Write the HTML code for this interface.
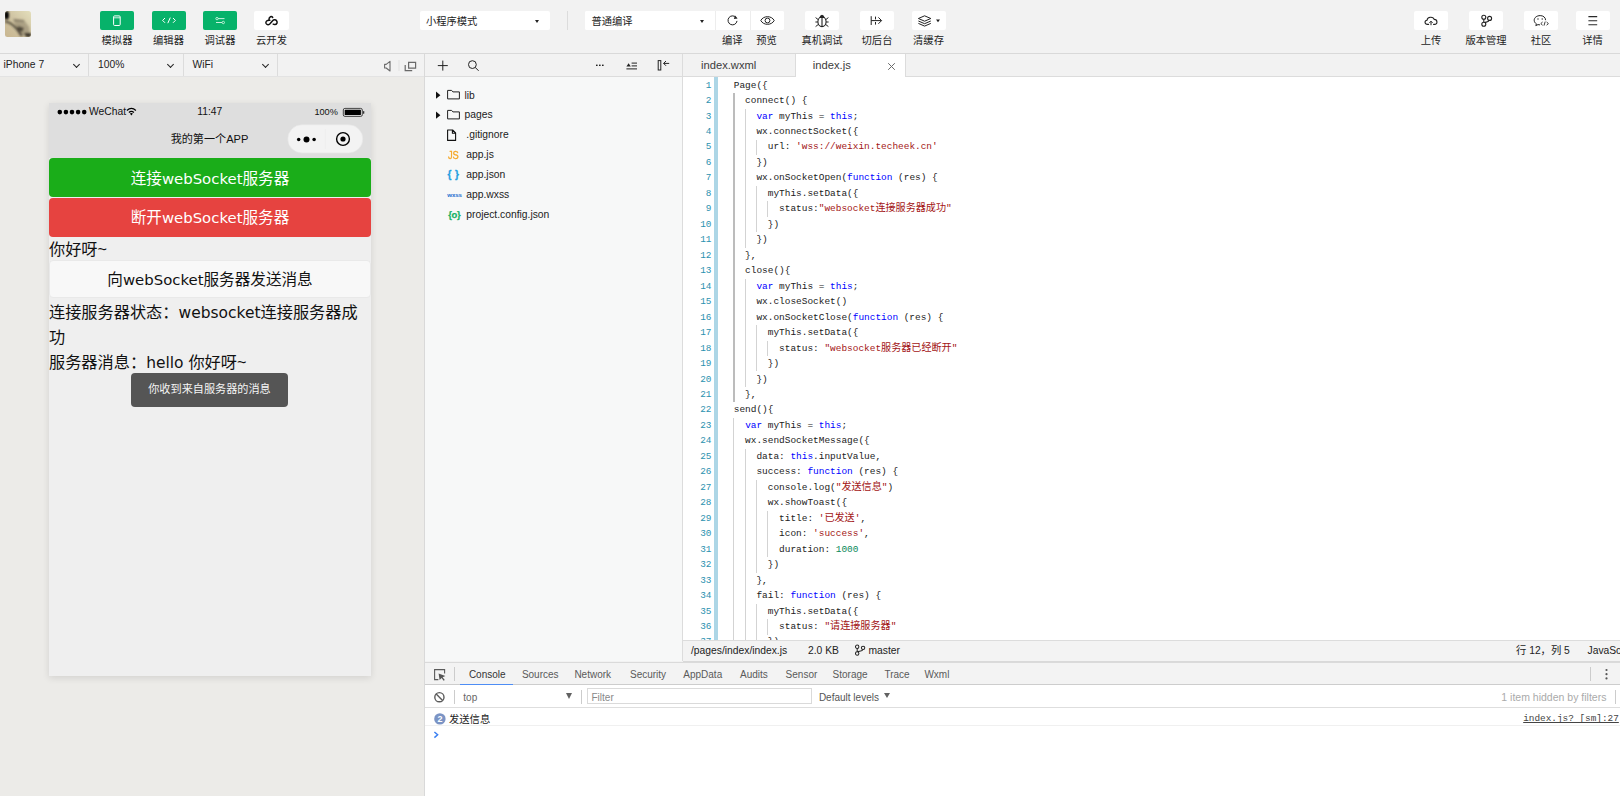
<!DOCTYPE html>
<html lang="zh-CN">
<head>
<meta charset="utf-8">
<title>微信开发者工具</title>
<style>
*{box-sizing:border-box;margin:0;padding:0}
html,body{width:1620px;height:796px;overflow:hidden;background:#f2f2f2;font-family:"Liberation Sans","Noto Sans CJK SC",sans-serif;color:#222}
.abs{position:absolute}
#root{position:relative;width:1620px;height:796px;overflow:hidden;background:#f2f2f2}
/* top toolbar */
#topbar{left:0;top:0;width:1620px;height:54px;background:#f2f2f2;border-bottom:1px solid #d9d9d9}
.tbtn{position:absolute;top:11px;height:19px;border-radius:2px;background:#fff}
.tbtn.g{background:#07b26a}
.tlbl{position:absolute;top:34.2px;font-size:10.3px;line-height:14px;text-align:center;color:#222;white-space:nowrap;transform:translateX(-50%)}
.tsel{position:absolute;top:11px;height:19px;background:#fff;border-radius:2px;font-size:10.3px;line-height:22.2px;padding-left:6.4px;color:#222}
.tsel:after{content:"";position:absolute;right:10.6px;top:8.6px;border:2.5px solid transparent;border-top:3px solid #222;border-bottom:0}
/* simulator */
#simbar{left:0;top:54px;width:424px;height:23px;background:#f2f2f2;border-bottom:1px solid #e3e3e3}
#simbar .it{position:absolute;top:0;height:22px;line-height:21px;font-size:10.3px;color:#222}
#simbar .vd{position:absolute;top:0;width:1px;height:22px;background:#dcdcdc}
.chev{position:absolute;top:8px;width:5px;height:5px;border-right:1.4px solid #222;border-bottom:1.4px solid #222;transform:rotate(45deg)}
#simarea{left:0;top:77px;width:424px;height:719px;background:#ecebe8}
#vdiv{left:424px;top:54px;width:1px;height:742px;background:#d9d9d9}
#phone{left:49px;top:103px;width:322px;height:573px;background:#efefef;box-shadow:0 2px 7px rgba(0,0,0,.11);overflow:hidden;font-family:"Liberation Sans","Noto Sans CJK SC",sans-serif}
#pnav{left:0;top:0;width:322px;height:55px;background:#dedede}
.pbtn{position:absolute;left:0;width:322px;height:40px;border-radius:4px;color:#fff;font-size:15.6px;line-height:41.2px;text-align:center}
.en{font-family:"DejaVu Sans","Liberation Sans",sans-serif;font-size:.955em}
.ptxt{position:absolute;left:0;font-size:16.2px;line-height:25px;color:#111;white-space:nowrap}
/* file tree */
#treebar{left:425px;top:54px;width:258px;height:23px;background:#f2f2f2;border-bottom:1px solid #dcdcdc;border-right:1px solid #dcdcdc}
#tree{left:425px;top:77px;width:258px;height:584px;background:#f7f8f8;border-right:1px solid #dcdcdc}
.ti{position:absolute;left:0;height:20px;line-height:20px;font-size:10.3px;color:#222;white-space:nowrap}
/* editor */
#tabs{left:683px;top:54px;width:937px;height:23px;background:#f2f2f2;border-bottom:1px solid #dcdcdc}
.tab{position:absolute;top:0;height:23px;line-height:23.2px;font-size:11.2px;color:#3c3c3c}
#code{left:683px;top:77px;width:937px;height:564px;background:#fff;overflow:hidden}
#code pre{position:absolute;left:50.8px;top:0.6px;font-family:"Liberation Mono","Noto Sans CJK SC",monospace;font-size:9.45px;line-height:15.47px;color:#222;white-space:pre}
#ln{position:absolute;left:0;top:0.6px;width:28.5px;text-align:right;font-family:"Liberation Mono",monospace;font-size:9.4px;line-height:15.47px;color:#2b91af;white-space:pre}
#code i{font-style:normal}
.c{font-size:10.1px}.k{color:#0000ff}.s{color:#a31515}.n{color:#09885a}
.guide{position:absolute;width:1px;background:#d3d3d3}
#status{left:683px;top:640px;width:937px;height:22px;background:#f3f3f3;border-top:1px solid #dcdcdc;border-bottom:1px solid #d9d9d9;font-size:10.3px;line-height:20.6px;color:#222}
#status span{position:absolute;top:0;white-space:nowrap}
/* devtools */
#dt{left:425px;top:661.5px;width:1195px;height:134.5px;background:#fff}
#dttabs{left:0;top:0;width:1195px;height:23.2px;background:#f3f3f3;border-bottom:1px solid #cdcdcd;box-shadow:inset 0 1px 0 #dadada}
#dttabs span{position:absolute;top:0;line-height:25px;font-size:10px;color:#5a5a5a;white-space:nowrap}
#dtfilter{left:0;top:23.2px;width:1195px;height:23.6px;background:#fff;border-bottom:1px solid #dedede}
</style>
</head>
<body>
<div id="root">
<div id="topbar" class="abs">
<svg class="abs" style="left:5px;top:11px" width="26" height="26" viewBox="0 0 26 26"><defs><linearGradient id="av" x1="0" y1="1" x2="1" y2="0"><stop offset="0" stop-color="#c9b690"/><stop offset=".5" stop-color="#cfc3a2"/><stop offset="1" stop-color="#e4dfbc"/></linearGradient><filter id="bl" x="-20%" y="-20%" width="140%" height="140%"><feGaussianBlur stdDeviation="1"/></filter><clipPath id="avc"><rect width="26" height="26" rx="2.5"/></clipPath></defs><g clip-path="url(#avc)"><rect width="26" height="26" fill="url(#av)"/><g filter="url(#bl)"><path d="M8 8 L19 9 L24 16 L25 25 L15 24 L11 16 Z" fill="#8a8068" opacity=".55"/><ellipse cx="1.6" cy="4.2" rx="2.4" ry="4.2" fill="#060504"/><path d="M0 10.5 C5 11 8 14 10 16 C13 18 14 22 17 25" fill="none" stroke="#3a3228" stroke-width="2.2" opacity=".8"/><path d="M13 15 L19 17 L17 21 L13 19 Z" fill="#3b342a" opacity=".8"/><path d="M19 22 L26 22 L26 26 L21 26 Z" fill="#2c261f" opacity=".85"/><path d="M9 9 L19 10" stroke="#4a4236" stroke-width="1" opacity=".7"/></g></g></svg>
<div class="tbtn g" style="left:100px;width:34px"><svg width="34" height="19" viewBox="0 0 34 19"><rect x="13.6" y="4.9" width="6.6" height="9.6" rx="1" fill="none" stroke="#fff" stroke-width="1"/><path d="M14 6.8h6" stroke="#fff" stroke-width=".8"/></svg></div>
<div class="tbtn g" style="left:151.5px;width:34px"><svg width="34" height="19" viewBox="0 0 34 19"><path d="M13 7 L10.6 9.4 L13 11.8 M21 7 L23.4 9.4 L21 11.8 M18.3 6.6 L15.8 12.2" fill="none" stroke="#fff" stroke-width="1"/></svg></div>
<div class="tbtn g" style="left:203px;width:34px"><svg width="34" height="19" viewBox="0 0 34 19"><path d="M15 7.6h6.5 M13 11.5h6" stroke="#c9f0dd" stroke-width="1"/><circle cx="14" cy="7.6" r="1.2" fill="none" stroke="#c9f0dd" stroke-width=".9"/><circle cx="20.3" cy="11.5" r="1.2" fill="none" stroke="#c9f0dd" stroke-width=".9"/></svg></div>
<div class="tbtn" style="left:254px;width:35px"><svg width="35" height="19" viewBox="0 0 35 19"><path d="M18.7 6.5 C17.7 5 15 5 14.8 9.2 M15.8 9.3 C13 9 11.4 10.6 12 12.2 C12.7 13.9 15 14.2 16.2 12.6 L18.6 9.8 C19.6 8.6 21.6 8.4 22.6 9.8 C23.8 11.4 22.8 13.8 20.6 13.6 C20 13.6 19.6 13.4 19.2 13.2" fill="none" stroke="#111" stroke-width="1.5" stroke-linecap="round" stroke-linejoin="round"/></svg></div>
<div class="tlbl" style="left:117px">模拟器</div>
<div class="tlbl" style="left:168.5px">编辑器</div>
<div class="tlbl" style="left:220px">调试器</div>
<div class="tlbl" style="left:271.5px">云开发</div>
<div class="tsel" style="left:419.5px;width:130px">小程序模式</div>
<div class="abs" style="left:567px;top:11px;width:1px;height:19px;background:#dcdcdc"></div>
<div class="tbtn" style="left:585px;width:199px"></div><div class="tsel" style="left:585px;width:130.5px;border-right:1px solid #ededed;border-radius:2px 0 0 2px">普通编译</div>
<div class="tbtn" style="left:716.5px;width:34px;border-radius:0;border-right:1px solid #ededed"><svg width="33" height="19" viewBox="0 0 33 19"><path d="M19.3 6.9 A4.5 4.5 0 1 0 20 9.9" fill="none" stroke="#222" stroke-width="1"/><path d="M18 4.4 L20.6 7.6 L16.9 8 Z" fill="#222"/></svg></div>
<div class="tbtn" style="left:751px;width:33px;border-radius:0 2px 2px 0"><svg width="33" height="19" viewBox="0 0 33 19"><path d="M9.8 9.5 C12.4 4.4 20.6 4.4 23.2 9.5 C20.6 14.6 12.4 14.6 9.8 9.5 Z" fill="none" stroke="#222" stroke-width="1"/><circle cx="16.5" cy="9.5" r="2.4" fill="none" stroke="#222" stroke-width="1"/></svg></div>
<div class="tbtn" style="left:805px;width:34px"><svg width="34" height="19" viewBox="0 0 34 19"><ellipse cx="17" cy="10.8" rx="4.1" ry="4.8" fill="none" stroke="#222" stroke-width="1.1"/><path d="M17 6v9.4" stroke="#222" stroke-width="1.1"/><path d="M14 6.9 Q17 0.8 20 6.9 Z" fill="#222"/><path d="M13.2 8.6 L10.6 6.6 M12.9 11 H10.4 M13.4 13.4 L10.6 15.6 M20.8 8.6 L23.4 6.6 M21.1 11 H23.6 M20.6 13.4 L23.4 15.6" stroke="#222" stroke-width="1" fill="none"/></svg></div>
<div class="tbtn" style="left:860px;width:34px"><svg width="34" height="19" viewBox="0 0 34 19"><path d="M11.2 5.2v8.8 M15.5 5.6v2.8 M15.5 11v2.6 M11.2 9.6 H21.4 M18.4 6.4 L21.6 9.6 L18.4 12.8" fill="none" stroke="#222" stroke-width="1"/></svg></div>
<div class="tbtn" style="left:911.5px;width:34.5px"><svg width="35" height="19" viewBox="0 0 35 19"><path d="M12.6 4.8 L18.8 7.5 L12.6 10.2 L6.4 7.5 Z M6.4 10 L12.6 12.7 L18.8 10 M6.4 12.4 L12.6 15.1 L18.8 12.4" fill="none" stroke="#222" stroke-width="1" stroke-linejoin="round"/><path d="M24 8.6 h4 l-2 2.6 Z" fill="#222"/></svg></div>
<div class="tlbl" style="left:732.3px">编译</div>
<div class="tlbl" style="left:766.6px">预览</div>
<div class="tlbl" style="left:822px">真机调试</div>
<div class="tlbl" style="left:877px">切后台</div>
<div class="tlbl" style="left:928.5px">清缓存</div>
<div class="tbtn" style="left:1414px;width:34px"><svg width="34" height="19" viewBox="0 0 34 19"><path d="M14.6 13.4 H13.6 C10.4 13.4 10.2 9.6 13 9.2 C13.4 5.4 19.4 5.4 20.2 8.4 C23.8 8.4 23.8 13.4 20.6 13.4 H19.6" fill="none" stroke="#222" stroke-width="1.1" stroke-linecap="round"/><path d="M17 14.2 V10.4 M15.4 11.8 L17 10.2 L18.6 11.8" fill="none" stroke="#222" stroke-width="1"/></svg></div>
<div class="tbtn" style="left:1469px;width:34px"><svg width="34" height="19" viewBox="0 0 34 19"><circle cx="14.8" cy="6.2" r="2" fill="none" stroke="#222" stroke-width="1.1"/><circle cx="14.8" cy="13.2" r="2" fill="none" stroke="#222" stroke-width="1.1"/><circle cx="20.6" cy="7.4" r="2" fill="none" stroke="#222" stroke-width="1.1"/><path d="M14.8 8.2 V11.2 M20.2 9.4 C19.6 11.4 16.6 10.8 15.6 11.6" fill="none" stroke="#222" stroke-width="1.1"/></svg></div>
<div class="tbtn" style="left:1524px;width:34px"><svg width="34" height="19" viewBox="0 0 34 19"><path d="M21.6 9.2 C21.6 6.4 19.2 4.6 16.2 4.6 C12.8 4.6 10.2 6.6 10.2 9.2 C10.2 10.8 11 12 12.4 12.8 L11.8 14.6 L14 13.6 C14.6 13.8 15.4 13.9 16 13.9" fill="none" stroke="#222" stroke-width="1" stroke-linejoin="round"/><circle cx="14" cy="8" r=".7" fill="#222"/><circle cx="18.2" cy="8" r=".7" fill="#222"/><path d="M18.6 11 L16.8 12.6 L18.6 14.2 M22.6 11 L24.4 12.6 L22.6 14.2 M21.2 10.6 L20 14.6" fill="none" stroke="#222" stroke-width=".9"/></svg></div>
<div class="tbtn" style="left:1575.5px;width:34px"><svg width="34" height="19" viewBox="0 0 34 19"><path d="M12.4 5.6 h8.8 M12.4 9.7 h8.8 M12.4 13.8 h8.8" stroke="#2a2a2a" stroke-width="1.05"/></svg></div>
<div class="tlbl" style="left:1431px">上传</div>
<div class="tlbl" style="left:1486px">版本管理</div>
<div class="tlbl" style="left:1541px">社区</div>
<div class="tlbl" style="left:1592.5px">详情</div>
</div>
<div id="simbar" class="abs">
<div class="it" style="left:3.5px">iPhone 7</div><div class="chev" style="left:73.5px"></div>
<div class="vd" style="left:88px"></div>
<div class="it" style="left:98px">100%</div><div class="chev" style="left:168px"></div>
<div class="vd" style="left:183px"></div>
<div class="it" style="left:192.5px">WiFi</div><div class="chev" style="left:262.5px"></div>
<div class="vd" style="left:277px"></div>
<svg class="abs" style="left:380px;top:0" width="44" height="22" viewBox="0 0 44 22"><path d="M4.6 10.4 h1.6 l3.8 -3 v9.6 l-3.8 -3 h-1.6 Z" fill="none" stroke="#6a6a6a" stroke-width="1.1" stroke-linejoin="round"/><path d="M19 6v11" stroke="#e2e2e2" stroke-width="1"/><path d="M28.6 8.4 h7 v5.8 h-7 Z" fill="none" stroke="#6a6a6a" stroke-width="1.2"/><path d="M25.2 11 v5.6 h7" fill="none" stroke="#6a6a6a" stroke-width="1.2"/></svg>
</div>
<div id="simarea" class="abs"></div>
<div id="phone" class="abs">
<div id="pnav" class="abs">
<svg class="abs" style="left:0;top:0" width="322" height="55" viewBox="0 0 322 55">
<g fill="#000"><circle cx="10.8" cy="9.1" r="2.3"/><circle cx="16.9" cy="9.1" r="2.3"/><circle cx="23" cy="9.1" r="2.3"/><circle cx="29.1" cy="9.1" r="2.3"/><circle cx="35.2" cy="9.1" r="2.3"/></g>
<text x="40" y="11.8" font-family="Liberation Sans, sans-serif" font-size="10.3" fill="#111">WeChat</text>
<g fill="none" stroke="#000" stroke-width="1.3"><path d="M77.9 7.4 Q82.4 3.4 86.9 7.4"/><path d="M79.9 9.5 Q82.4 7.2 84.9 9.5"/></g><path d="M80.9 10.6 Q82.4 9.6 83.9 10.6 L82.4 12.4 Z" fill="#000"/>
<text x="160.7" y="12" text-anchor="middle" font-family="Liberation Sans, sans-serif" font-size="10.3" fill="#111">11:47</text>
<text x="265.4" y="12" font-family="Liberation Sans, sans-serif" font-size="9.2" fill="#111">100%</text>
<rect x="294.3" y="5.4" width="19" height="8" rx="1.6" fill="none" stroke="#333" stroke-width=".9"/><rect x="295.7" y="6.8" width="16.2" height="5.2" rx=".6" fill="#000"/><rect x="314" y="8" width="1.3" height="2.8" rx=".6" fill="#333"/>
<text x="160.5" y="39.8" text-anchor="middle" font-family="Liberation Sans, Noto Sans CJK SC, sans-serif" font-size="11.1" fill="#111">我的第一个APP</text>
<rect x="238.8" y="21.8" width="75" height="28.2" rx="14.1" fill="#f3f3f3" stroke="#e6e6e6" stroke-width=".6"/>
<path d="M276.3 26 v20" stroke="#ececec" stroke-width=".8"/>
<circle cx="249.7" cy="36.4" r="1.75" fill="#000"/><circle cx="257.5" cy="36.4" r="3" fill="#000"/><circle cx="265.1" cy="36.4" r="1.75" fill="#000"/>
<circle cx="294" cy="36" r="6.4" fill="none" stroke="#000" stroke-width="1.4"/><circle cx="294" cy="36" r="2.6" fill="#000"/>
</svg>
</div>
<div class="pbtn" style="top:55px;height:39.4px;background:#1aad19">连接<span class="en">webSocket</span>服务器</div>
<div class="pbtn" style="top:94.8px;height:39px;line-height:40.4px;background:#e64340">断开<span class="en">webSocket</span>服务器</div>
<div class="ptxt" style="top:133.5px">你好呀~</div>
<div class="pbtn" style="top:156.8px;height:38.4px;line-height:38.8px;background:#f8f8f8;color:#111;border:1px solid #e9e9e9">向<span class="en">webSocket</span>服务器发送消息</div>
<div class="ptxt" style="top:197px">连接服务器状态：<span class="en">websocket</span>连接服务器成</div>
<div class="ptxt" style="top:222px">功</div>
<div class="ptxt" style="top:247px">服务器消息：<span class="en">hello </span>你好呀~</div>
<div class="abs" style="left:82px;top:270px;width:157px;height:34px;border-radius:4px;background:#555;color:#f4f4f4;font-size:11.15px;line-height:32.4px;text-align:center">你收到来自服务器的消息</div>
</div>
<div id="vdiv" class="abs"></div>
<div id="treebar" class="abs">
<svg class="abs" style="left:0;top:0" width="257" height="22" viewBox="0 0 257 22"><g fill="none" stroke="#222" stroke-width="1"><path d="M12.8 11.6 h10 M17.8 6.6 v10"/><circle cx="47.4" cy="10.6" r="3.9"/><path d="M50.2 13.4 L53.6 16.8"/><path d="M201.4 14.9 h10.6 M206.6 9.1 h5.4 M206.6 11.9 h5.4"/><rect x="233.2" y="6.6" width="2.6" height="9.4"/><path d="M238.6 9.4 h5.6 M241 7 L238.6 9.4 L241 11.8"/></g><path d="M201.4 12.5 L203.6 9.3 L205.8 12.5 Z" fill="#222"/><g fill="#222"><rect x="171" y="10.6" width="1.6" height="1.4"/><rect x="174" y="10.6" width="1.6" height="1.4"/><rect x="177" y="10.6" width="1.6" height="1.4"/></g></svg>
</div>
<div id="tree" class="abs">
<div class="ti" style="top:8.50px"><svg class="abs" style="left:9px;top:2.4px" width="28" height="14" viewBox="0 0 28 14"><path d="M2 3.6 L6.4 7.2 L2 10.8 Z" fill="#111"/><path d="M13.6 2.4 h4 l1.3 1.5 h6.5 v7 h-11.8 Z" fill="none" stroke="#222" stroke-width="1" stroke-linejoin="round"/></svg><span class="abs" style="left:39.5px;top:0">lib</span></div>
<div class="ti" style="top:28.40px"><svg class="abs" style="left:9px;top:2.4px" width="28" height="14" viewBox="0 0 28 14"><path d="M2 3.6 L6.4 7.2 L2 10.8 Z" fill="#111"/><path d="M13.6 2.4 h4 l1.3 1.5 h6.5 v7 h-11.8 Z" fill="none" stroke="#222" stroke-width="1" stroke-linejoin="round"/></svg><span class="abs" style="left:39.5px;top:0">pages</span></div>
<div class="ti" style="top:48.30px"><svg class="abs" style="left:21px;top:3px" width="12" height="14" viewBox="0 0 12 14"><path d="M1.6 2 h5 l3 3 v7.4 h-8 Z M6.4 2 v3.2 h3.2" fill="none" stroke="#111" stroke-width="1.1" stroke-linejoin="round"/></svg><span class="abs" style="left:41.3px;top:0">.gitignore</span></div>
<div class="ti" style="top:68.20px"><span class="abs" style="left:23.4px;top:0.2px;font-size:11.6px;color:#f5a623;-webkit-text-stroke:.35px #f5a623;letter-spacing:-.2px;transform:scaleX(.8);transform-origin:0 50%;font-family:'Liberation Sans',sans-serif">JS</span><span class="abs" style="left:41.3px;top:0">app.js</span></div>
<div class="ti" style="top:88.10px"><span class="abs" style="left:22.6px;top:-0.6px;font-size:10px;font-weight:bold;color:#1f9fe0;-webkit-text-stroke:.3px #1f9fe0;letter-spacing:3.6px;font-family:'Liberation Sans',sans-serif">{}</span><span class="abs" style="left:41.3px;top:0">app.json</span></div>
<div class="ti" style="top:108.00px"><span class="abs" style="left:22.2px;top:0.4px;font-size:6.2px;font-weight:bold;color:#1f6fd0;letter-spacing:-.1px;font-family:'Liberation Sans',sans-serif">wxss</span><span class="abs" style="left:41.3px;top:0">app.wxss</span></div>
<div class="ti" style="top:127.90px"><span class="abs" style="left:23.2px;top:-0.4px;font-size:9.4px;font-weight:bold;color:#12b264;-webkit-text-stroke:.25px #12b264;letter-spacing:-.3px;font-family:'Liberation Sans',sans-serif">{o}</span><span class="abs" style="left:41.3px;top:0">project.config.json</span></div>
</div>
<div id="tabs" class="abs">
<div class="tab" style="left:0;width:112.5px;border-right:1px solid #dcdcdc"><span class="abs" style="left:18px;top:0">index.wxml</span></div>
<div class="tab" style="left:112.5px;width:110px;background:#fff;border-right:1px solid #dcdcdc"><span class="abs" style="left:17.3px;top:0">index.js</span><svg class="abs" style="left:91px;top:7.5px" width="9" height="9" viewBox="0 0 9 9"><path d="M1.2 1.2 L7.8 7.8 M7.8 1.2 L1.2 7.8" stroke="#6a6a6a" stroke-width="1"/></svg></div>
</div>
<div id="code" class="abs">
<div class="abs" style="left:30.6px;top:0;width:4.4px;height:564px;background:#add6e6"></div>
<div id="ln">1
2
3
4
5
6
7
8
9
10
11
12
13
14
15
16
17
18
19
20
21
22
23
24
25
26
27
28
29
30
31
32
33
34
35
36
37</div>
<div class="guide" style="background:#bcbcbc;width:1.3px;left:50.4px;top:16.1px;height:309.4px"></div><div class="guide" style="left:50.4px;top:340.9px;height:232.1px"></div><div class="guide" style="left:61.7px;top:31.5px;height:139.2px"></div><div class="guide" style="left:61.7px;top:201.7px;height:108.3px"></div><div class="guide" style="left:61.7px;top:371.9px;height:201.1px"></div><div class="guide" style="left:73.1px;top:62.5px;height:15.5px"></div><div class="guide" style="left:73.1px;top:108.9px;height:46.4px"></div><div class="guide" style="left:73.1px;top:248.1px;height:46.4px"></div><div class="guide" style="left:73.1px;top:402.8px;height:92.8px"></div><div class="guide" style="left:73.1px;top:526.6px;height:46.4px"></div><div class="guide" style="left:84.4px;top:124.4px;height:15.5px"></div><div class="guide" style="left:84.4px;top:263.6px;height:15.5px"></div><div class="guide" style="left:84.4px;top:433.8px;height:46.4px"></div><div class="guide" style="left:84.4px;top:542.1px;height:15.5px"></div>
<pre>Page({
  connect() {
    <i class="k">var</i> myThis = <i class="k">this</i>;
    wx.connectSocket({
      url: <i class="s">'wss://weixin.techeek.cn'</i>
    })
    wx.onSocketOpen(<i class="k">function</i> (res) {
      myThis.setData({
        status:<i class="s">"websocket<i class="c">连接服务器成功</i>"</i>
      })
    })
  },
  close(){
    <i class="k">var</i> myThis = <i class="k">this</i>;
    wx.closeSocket()
    wx.onSocketClose(<i class="k">function</i> (res) {
      myThis.setData({
        status: <i class="s">"websocket<i class="c">服务器已经断开</i>"</i>
      })
    })
  },
send(){
  <i class="k">var</i> myThis = <i class="k">this</i>;
  wx.sendSocketMessage({
    data: <i class="k">this</i>.inputValue,
    success: <i class="k">function</i> (res) {
      console.log(<i class="s">"<i class="c">发送信息</i>"</i>)
      wx.showToast({
        title: <i class="s">'<i class="c">已发送</i>'</i>,
        icon: <i class="s">'success'</i>,
        duration: <i class="n">1000</i>
      })
    },
    fail: <i class="k">function</i> (res) {
      myThis.setData({
        status: <i class="s">"<i class="c">请连接服务器</i>"</i>
      })</pre>
</div>
<div id="status" class="abs">
<span style="left:8px">/pages/index/index.js</span><span style="left:125px">2.0 KB</span>
<svg class="abs" style="left:171px;top:3.4px" width="12.5" height="12.5" viewBox="0 0 11 11"><g fill="none" stroke="#222" stroke-width=".9"><circle cx="2.8" cy="2.4" r="1.5"/><circle cx="2.8" cy="8.4" r="1.5"/><circle cx="8" cy="3.4" r="1.5"/><path d="M2.8 3.9 V6.9 M7.8 4.9 C7.4 6.6 4 6.2 3.2 7"/></g></svg>
<span style="left:185.5px">master</span>
<span style="left:833px">行 12，列 5</span><span style="left:904.5px">JavaScript</span>
</div>
<div id="dt" class="abs">
<div id="dttabs" class="abs">
<svg class="abs" style="left:8px;top:6px" width="14" height="14" viewBox="0 0 14 14"><path d="M11.6 5.4 V1.6 H1.6 V11.6 H5.4" fill="none" stroke="#5a5a5a" stroke-width="1.1"/><path d="M5.6 5.4 L12.4 8 L9.6 9.2 L11.8 12 L10.6 12.8 L8.6 10 L6.6 12 Z" fill="#555"/></svg>
<div class="abs" style="left:29px;top:5px;width:1px;height:14px;background:#ccc"></div>
<span style="left:43.9px;color:#333">Console</span><span style="left:96.9px">Sources</span><span style="left:149.4px">Network</span><span style="left:205.0px">Security</span><span style="left:258.3px">AppData</span><span style="left:315.0px">Audits</span><span style="left:360.6px">Sensor</span><span style="left:407.6px">Storage</span><span style="left:459.4px">Trace</span><span style="left:499.4px">Wxml</span>
<div class="abs" style="left:35px;top:22px;width:53.3px;height:1.3px;background:#4d8df5"></div>
<div class="abs" style="left:1165px;top:5px;width:1px;height:14px;background:#ccc"></div>
<svg class="abs" style="left:1179px;top:6px" width="5" height="13" viewBox="0 0 5 13"><circle cx="2.5" cy="2" r="1.1" fill="#555"/><circle cx="2.5" cy="6.2" r="1.1" fill="#555"/><circle cx="2.5" cy="10.4" r="1.1" fill="#555"/></svg>
</div>
<div id="dtfilter" class="abs">
<svg class="abs" style="left:8px;top:6px" width="13" height="13" viewBox="0 0 13 13"><circle cx="6.4" cy="6.2" r="4.6" fill="none" stroke="#5c5c5c" stroke-width="1.4"/><path d="M3.2 3 L9.6 9.4" stroke="#5c5c5c" stroke-width="1.4"/></svg>
<div class="abs" style="left:29px;top:5px;width:1px;height:14px;background:#ccc"></div>
<span class="abs" style="left:38.3px;top:0;line-height:25.4px;font-size:10px;color:#666">top</span>
<div class="abs" style="left:141.4px;top:8.4px;border:3.4px solid transparent;border-top:6px solid #626262;border-bottom:0"></div>
<div class="abs" style="left:156px;top:5px;width:1px;height:14px;background:#ccc"></div>
<div class="abs" style="left:162.4px;top:3.4px;width:224.4px;height:16.2px;border:1px solid #dadada;background:#fff"></div>
<span class="abs" style="left:166.5px;top:0;line-height:25.4px;font-size:10px;color:#888">Filter</span>
<span class="abs" style="left:393.9px;top:0;line-height:25.4px;font-size:10px;color:#555">Default levels</span>
<div class="abs" style="left:459.4px;top:8.4px;border:3px solid transparent;border-top:5.4px solid #626262;border-bottom:0"></div>
<span class="abs" style="right:13.6px;top:0;line-height:25.4px;font-size:10.5px;color:#aaa">1 item hidden by filters</span>
<div class="abs" style="left:1189.5px;top:5px;width:1px;height:14px;background:#ccc"></div>
</div>
<div class="abs" style="left:0;top:46.8px;width:1195px;height:17.8px;border-bottom:1px solid #f0f0f0">
<svg class="abs" style="left:8.5px;top:4.3px" width="12" height="12" viewBox="0 0 12 12"><circle cx="5.9" cy="5.9" r="5.7" fill="#7b94c5"/><text x="5.9" y="9.1" text-anchor="middle" font-family="Liberation Sans, sans-serif" font-size="9" font-weight="bold" fill="#fff">2</text></svg>
<span class="abs" style="left:24px;top:1.4px;line-height:19px;font-size:10.3px;color:#222">发送信息</span>
<span class="abs" style="left:1098.2px;top:1.2px;line-height:19px;font-size:9.4px;font-family:'Liberation Mono',monospace;color:#444;text-decoration:underline;white-space:nowrap">index.js? [sm]:27</span>
</div>
<svg class="abs" style="left:8px;top:68.5px" width="8" height="9" viewBox="0 0 8 9"><path d="M1.4 2 L4.6 4.8 L1.4 7.6" fill="none" stroke="#3b80f2" stroke-width="1.5"/></svg>
</div>
</div>
</body>
</html>
